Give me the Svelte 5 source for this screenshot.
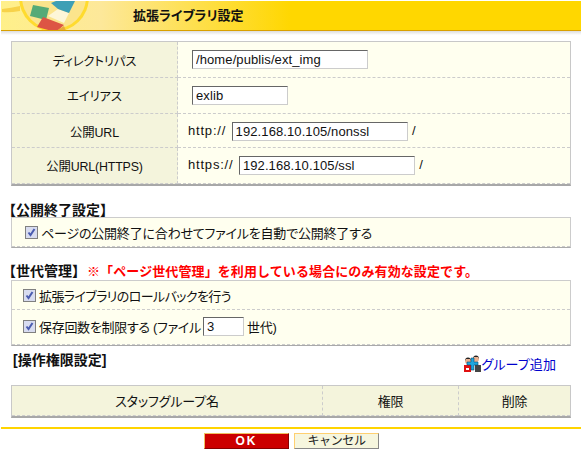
<script>
  let rows = [
    { label: "ディレクトリパス", value: "/home/publis/ext_img", width: 176 },
    { label: "エイリアス", value: "exlib", width: 96 },
    { label: "公開URL", prefix: "http://", value: "192.168.10.105/nonssl", width: 176, suffix: "/" },
    { label: "公開URL(HTTPS)", prefix: "https://", value: "192.168.10.105/ssl", width: 176, suffix: "/" }
  ];
</script>

<div class="page">
  <header class="title">
    <svg class="logo" width="90" height="30" viewBox="0 0 90 30">
      <circle cx="53" cy="-4" r="35" fill="#ffdb2e" />
      <circle cx="53" cy="-4" r="32" fill="#fbe48c" />
      <path d="M1 8 Q10 7 19 5 L19 10 Q8 12 1 11Z" fill="#f7d24a" />
      <path d="M47 15 L57 8 L68 12 L63 22Z" fill="#fdf6d8" />
      <path d="M50 2 L55 0 L74 0 L68 12 L57 8Z" fill="#3d9fb5" />
      <path d="M32 4 L48 7 L45 19 L29 15Z" fill="#55aa77" />
      <path d="M42 16 L63 24 L55 31 L36 26Z" fill="#dd5544" />
      <path d="M55 30 L63 25 L65 30Z" fill="#e8a93c" />
    </svg>
    <h1>拡張ライブラリ設定</h1>
  </header>

  <main class="content">
    <table class="grid form">
      <tbody>
        {#each rows as row}
          <tr>
            <th>{row.label}</th>
            <td class:plain={!row.prefix}>
              {#if row.prefix}<span class="prefix">{row.prefix}</span>{/if}
              <input type="text" value={row.value} style="width:{row.width}px" />
              {#if row.suffix}<span class="suffix">{row.suffix}</span>{/if}
            </td>
          </tr>
        {/each}
      </tbody>
    </table>

    <h2 class="first">【公開終了設定】</h2>
    <div class="box">
      <label class="line wide"><input type="checkbox" checked />ページの公開終了に合わせてファイルを自動で公開終了する</label>
    </div>

    <h2 class="second">【世代管理】<span class="warn">※「ページ世代管理」を利用している場合にのみ有効な設定です。</span></h2>
    <div class="box">
      <label class="line narrow"><input type="checkbox" checked />拡張ライブラリのロールバックを行う</label>
      <div class="line tall">
        <label><input type="checkbox" checked />保存回数を制限する (ファイル</label>
        <input class="count" type="text" value="3" />
        <span>世代)</span>
      </div>
    </div>

    <div class="perm-head">
      <h2>[操作権限設定]</h2>
      <a href="#add">
        <svg width="17" height="17" viewBox="0 0 17 17">
          <rect x="0" y="10" width="7" height="7" fill="#e01010" />
          <rect x="2" y="13" width="3" height="2" fill="#fff" />
          <rect x="11" y="10" width="6" height="7" fill="#444" />
          <circle cx="4" cy="6" r="3" fill="#e8b090" />
          <path d="M1 6a3 3.5 0 0 1 6 0l-1-2H2z" fill="#222" />
          <circle cx="12" cy="4" r="3" fill="#e8b090" />
          <path d="M9 4a3 3.5 0 0 1 6 0l-1-2h-4z" fill="#222" />
          <path d="M7 3h3v4h4v3h-4v5H7v-5H3V7h4z" fill="#1fa8e0" stroke="#0c4a70" stroke-width=".6" />
        </svg>
        グループ追加
      </a>
    </div>

    <table class="grid staff">
      <tbody>
        <tr>
          <th class="name">スタッフグループ名</th>
          <th class="auth">権限</th>
          <th class="del">削除</th>
        </tr>
      </tbody>
    </table>
  </main>

  <footer class="actions">
    <button class="ok">OK</button>
    <button class="cancel">キャンセル</button>
  </footer>
</div>

<style>
  :global(body) {
    margin: 0;
    background: #fff;
  }
  .page {
    width: 581px;
    height: 461px;
    overflow: hidden;
    padding: 1px 0 0 1px;
    box-sizing: border-box;
    font-family: "Liberation Sans", "Noto Sans CJK JP", sans-serif;
    font-size: 13px;
    font-feature-settings: "palt";
    letter-spacing: -0.15px;
    color: #111;
  }
  .title {
    height: 30px;
    box-sizing: border-box;
    display: flex;
    align-items: center;
    position: relative;
    overflow: hidden;
    background: linear-gradient(90deg, #fff08a 0, #fde89a 100px, #ffd700 290px);
    border-bottom: 1px solid #d9a000;
  }
  .logo {
    position: absolute;
    left: 0;
    top: 0;
  }
  .title h1 {
    margin: 0 0 0 132px;
    font-size: 13px;
    font-weight: 700;
    line-height: 18px;
    letter-spacing: 0;
    position: relative;
  }
  .content {
    padding: 10px 10px 0 10px;
    background: linear-gradient(#ddd, #fff 4px) no-repeat top / 100% 4px;
  }
  .grid {
    width: 560px;
    box-sizing: border-box;
    border-collapse: separate;
    border-spacing: 0;
    border: 1px solid #c8c8c8;
    border-bottom: 2px solid #a8a8a8;
    background: #ffffef;
  }
  .form th {
    width: 166px;
    box-sizing: border-box;
    background: #f4f4dc;
    font-size: 12.4px;
    font-weight: 400;
    border-right: 1px dashed #ccc;
    border-bottom: 1px dashed #ccc;
    padding: 2px 0 0;
  }
  .form td {
    padding: 0 0 0 10px;
    border-bottom: 1px dashed #ccc;
    height: 35px;
    white-space: nowrap;
  }
  .form td.plain {
    padding-left: 14px;
  }
  .form tr:nth-child(2) th {
    padding-top: 0;
  }
  .form tr:nth-child(3) td {
    height: 31px;
    padding-top: 2px;
  }
  .form tr:nth-child(3) th {
    height: 34px;
    padding-top: 3px;
  }
  .form tr:last-child td {
    height: 35px;
  }
  .form tr:last-child th {
    height: 36px;
    padding-top: 0;
  }
  input[type="text"] {
    font: 13px "Liberation Sans", sans-serif;
    letter-spacing: 0.1px;
    height: 19px;
    padding: 0 3px;
    box-sizing: border-box;
    border: 1px solid #ccc;
    border-top-color: #666;
    border-left-color: #666;
    outline: none;
    background: #fff;
    color: #111;
    vertical-align: middle;
  }
  .prefix {
    letter-spacing: 0.8px;
    margin-right: 2px;
  }
  .suffix {
    margin-left: 1px;
  }
  h2 {
    margin: 0;
    font-size: 14px;
    font-weight: 700;
    line-height: 18px;
    letter-spacing: 0;
  }
  h2.first {
    margin: 15px 0 -2px -9px;
    font-feature-settings: "palt" 0;
  }
  h2.second {
    margin: 14px 0 -1px -9px;
    font-feature-settings: "palt" 0;
  }
  .warn {
    color: #f00;
    font-size: 13px;
    letter-spacing: 0.1px;
    margin-left: 1px;
  }
  .box {
    width: 560px;
    box-sizing: border-box;
    background: #ffffef;
    border: 1px solid #ccc;
    border-bottom: 1px solid #aaa;
  }
  .line {
    display: flex;
    align-items: center;
    height: 28px;
    padding-left: 11px;
    border-bottom: 1px dashed #ccc;
  }
  .line.wide {
    padding-left: 13px;
    letter-spacing: -0.2px;
  }
  .line.narrow {
    letter-spacing: -0.6px;
  }
  .line.tall {
    height: 32px;
    padding-bottom: 2px;
  }
  .line label {
    display: flex;
    align-items: center;
    letter-spacing: -0.3px;
  }
  input[type="checkbox"] {
    appearance: none;
    width: 13px;
    height: 13px;
    margin: 0 3px 0 0;
    flex: none;
    border: 1px solid #808080;
    background: #d8dcf0 url("data:image/svg+xml,%3Csvg xmlns='http://www.w3.org/2000/svg' viewBox='0 0 11 11'%3E%3Cpath d='M2.5 5.5l2 2.5 4-6' fill='none' stroke='%234a5cb0' stroke-width='2'/%3E%3C/svg%3E") center / 11px 11px no-repeat;
  }
  .count {
    width: 41px;
    margin: 0 3px 0 2px;
  }
  .perm-head {
    display: flex;
    justify-content: space-between;
    align-items: flex-start;
    margin-top: 5px;
    height: 34px;
  }
  .perm-head h2 {
    margin-left: 2px;
  }
  .perm-head a {
    display: flex;
    align-items: center;
    color: #0000cc;
    letter-spacing: 0.1px;
    text-decoration: none;
    margin: 3px 15px 0 0;
  }
  .staff th {
    height: 29px;
    padding: 0;
    background: #f4f4dc;
    font-weight: 400;
    border-bottom: 1px dashed #ccc;
  }
  .name {
    width: 310px;
  }
  .auth {
    width: 135px;
    border-left: 1px dashed #ccc;
  }
  .del {
    border-left: 1px dashed #ccc;
  }
  .actions {
    margin-top: 9px;
    border-top: 2px solid #ffd400;
    display: flex;
    justify-content: center;
    gap: 5px;
    padding: 4px 0 0 1px;
  }
  button {
    width: 85px;
    height: 16px;
    padding: 0;
    box-sizing: border-box;
    font-family: inherit;
    font-size: 12px;
    line-height: 1;
  }
  .ok {
    background: #cc0000;
    color: #fff;
    font-weight: 700;
    letter-spacing: 2px;
    border: 1px solid #800;
    border-top-color: #f0c060;
    border-left-color: #f0c060;
  }
  .cancel {
    background: #f6f6de;
    color: #222;
    letter-spacing: -0.4px;
    border: 1px solid #888;
    border-top-color: #ffd070;
    border-left-color: #ffd070;
  }
</style>
